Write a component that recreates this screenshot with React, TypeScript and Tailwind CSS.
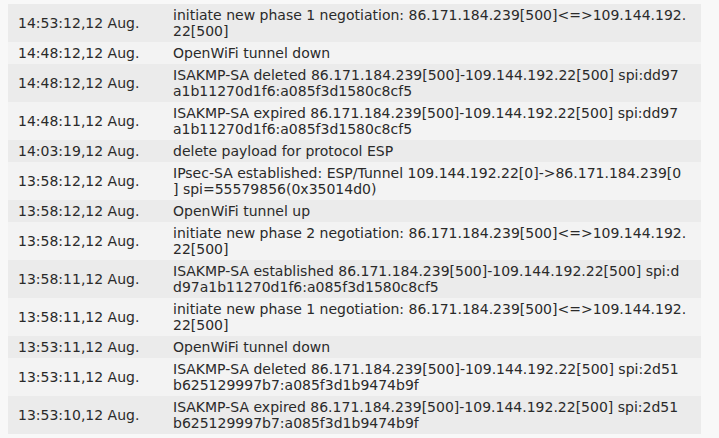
import React from 'react';

// messages are wrapped where the original log viewer wraps them
const rows: [string, string[]][] = [
  ['14:53:12,12 Aug.', ['initiate new phase 1 negotiation: 86.171.184.239[500]<=>109.144.192.', '22[500]']],
  ['14:48:12,12 Aug.', ['OpenWiFi tunnel down']],
  ['14:48:12,12 Aug.', ['ISAKMP-SA deleted 86.171.184.239[500]-109.144.192.22[500] spi:dd97', 'a1b11270d1f6:a085f3d1580c8cf5']],
  ['14:48:11,12 Aug.', ['ISAKMP-SA expired 86.171.184.239[500]-109.144.192.22[500] spi:dd97', 'a1b11270d1f6:a085f3d1580c8cf5']],
  ['14:03:19,12 Aug.', ['delete payload for protocol ESP']],
  ['13:58:12,12 Aug.', ['IPsec-SA established: ESP/Tunnel 109.144.192.22[0]->86.171.184.239[0', '] spi=55579856(0x35014d0)']],
  ['13:58:12,12 Aug.', ['OpenWiFi tunnel up']],
  ['13:58:12,12 Aug.', ['initiate new phase 2 negotiation: 86.171.184.239[500]<=>109.144.192.', '22[500]']],
  ['13:58:11,12 Aug.', ['ISAKMP-SA established 86.171.184.239[500]-109.144.192.22[500] spi:d', 'd97a1b11270d1f6:a085f3d1580c8cf5']],
  ['13:58:11,12 Aug.', ['initiate new phase 1 negotiation: 86.171.184.239[500]<=>109.144.192.', '22[500]']],
  ['13:53:11,12 Aug.', ['OpenWiFi tunnel down']],
  ['13:53:11,12 Aug.', ['ISAKMP-SA deleted 86.171.184.239[500]-109.144.192.22[500] spi:2d51', 'b625129997b7:a085f3d1b9474b9f']],
  ['13:53:10,12 Aug.', ['ISAKMP-SA expired 86.171.184.239[500]-109.144.192.22[500] spi:2d51', 'b625129997b7:a085f3d1b9474b9f']],
];

const App = () => {
  return (
    <div className="min-h-screen bg-[#f8f8f8] pt-[4px] pl-[8px]" style={{ fontFamily: '"DejaVu Sans", Verdana, sans-serif' }}>
      <table className="w-[693px] border-collapse text-[14px] leading-[16px] text-[#2a2a2a]">
        <tbody>
          {rows.map(([time, lines], i) => (
            <tr key={i} className={i % 2 === 0 ? 'bg-[#ebebeb]' : 'bg-[#f3f3f3]'}>
              <td className="w-[155px] pl-[10px] py-[3px] align-middle whitespace-nowrap">{time}</td>
              <td className="pl-[10px] pr-[4px] py-[3px] whitespace-nowrap">
                {lines.map((l, j) => (
                  <div key={j}>{l}</div>
                ))}
              </td>
            </tr>
          ))}
        </tbody>
      </table>
    </div>
  );
};

export default App;
